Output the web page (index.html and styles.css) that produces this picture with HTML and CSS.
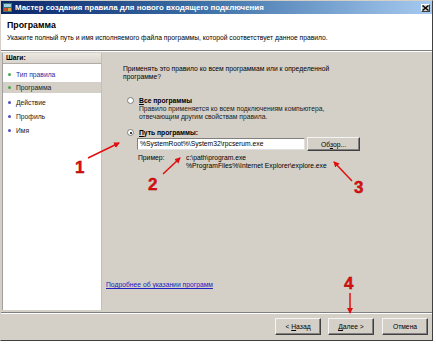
FILE: index.html
```html
<!DOCTYPE html>
<html lang="ru">
<head>
<meta charset="utf-8">
<title>Мастер создания правила</title>
<link rel="stylesheet" href="styles.css">
</head>
<body>
<div class="window">
  <div class="titlebar">
    <svg class="ticon" width="9" height="9" viewBox="0 0 9 9"><rect x="0" y="0" width="9" height="9" fill="#3a7a5a"/><rect x="1" y="1" width="7" height="3" fill="#9fd0e8"/><rect x="1" y="5" width="3" height="3" fill="#c85030"/><rect x="5" y="5" width="3" height="3" fill="#e0a040"/></svg>
    <span class="ttext">Мастер создания правила для нового входящего подключения</span>
    <span class="close"><svg width="7" height="6" viewBox="0 0 7 6"><path d="M0.5 0.5L6.5 5.5M6.5 0.5L0.5 5.5" stroke="#000" stroke-width="1.4"/></svg></span>
  </div>
  <div class="header">
    <div class="htitle">Программа</div>
    <div class="hsub">Укажите полный путь и имя исполняемого файла программы, которой соответствует данное правило.</div>
  </div>
  <div class="body">
    <div class="steps">
      <div class="steps-head">Шаги:</div>
      <ul class="steps-list">
        <li class="step done"><span class="dot green"></span>Тип правила</li>
        <li class="step current"><span class="dot green"></span>Программа</li>
        <li class="step"><span class="dot blue"></span>Действие</li>
        <li class="step"><span class="dot blue"></span>Профиль</li>
        <li class="step"><span class="dot blue"></span>Имя</li>
      </ul>
    </div>
    <div class="main">
      <p class="question">Применять это правило ко всем программам или к определенной<br>программе?</p>
      <div class="option">
        <span class="radio"></span>
        <div class="opt-body">
          <div class="opt-label"><u>В</u>се программы</div>
          <div class="opt-desc">Правило применяется ко всем подключениям компьютера,<br>отвечающим другим свойствам правила.</div>
        </div>
      </div>
      <div class="option second">
        <span class="radio checked"></span>
        <div class="opt-body">
          <div class="opt-label"><u>П</u>уть программы:</div>
          <div class="path-row">
            <div class="input">%SystemRoot%\System32\rpcserum.exe</div>
            <button class="btn browse">Об<u>з</u>ор...</button>
          </div>
          <div class="example">
            <span class="ex-label">Пример:</span>
            <span class="ex-vals">c:\path\program.exe<br>%ProgramFiles%\Internet Explorer\explore.exe</span>
          </div>
        </div>
      </div>
      <a class="link" href="#">Подробнее об указании программ</a>
    </div>
  </div>
  <div class="footer">
    <button class="btn">&lt; <u>Н</u>азад</button>
    <button class="btn"><u>Д</u>алее &gt;</button>
    <button class="btn cancel">Отмена</button>
  </div>
</div>
<svg class="annot" width="436" height="345" viewBox="0 0 436 345">
  <defs>
    <marker id="ah" markerWidth="6" markerHeight="6" refX="5" refY="3" orient="auto" markerUnits="userSpaceOnUse">
      <path d="M0 0L6 3L0 6z" fill="#e01010"/>
    </marker>
  </defs>
  <g stroke="#e01010" stroke-width="1.5" fill="none">
    <line x1="88" y1="158" x2="119" y2="143" marker-end="url(#ah)"/>
    <line x1="163" y1="174" x2="180" y2="158" marker-end="url(#ah)"/>
    <line x1="352" y1="181" x2="334" y2="162" marker-end="url(#ah)"/>
    <line x1="350" y1="293" x2="350" y2="313" marker-end="url(#ah)"/>
  </g>
  <g class="num">
    <text x="75" y="173">1</text>
    <text x="148" y="190">2</text>
    <text x="354" y="193">3</text>
    <text x="344" y="289">4</text>
  </g>
</svg>
</body>
</html>
```
FILE: styles.css
```css
* { box-sizing: border-box; }
html, body { margin: 0; padding: 0; }
body {
  width: 436px;
  height: 345px;
  background: #ffffff;
  font-family: "Liberation Sans", Arial, sans-serif;
  font-size: 6.75px;
  color: #000;
  position: relative;
  overflow: hidden;
}
.window {
  width: 433px;
  height: 341px;
  border: 1px solid #404040;
  border-top-color: #d4d0c8;
  border-left-color: #d4d0c8;
  background: #d4d0c8;
  display: flex;
  flex-direction: column;
}
.titlebar {
  height: 13px;
  flex: none;
  background: linear-gradient(to right, #0a246a 0%, #3a6ea5 45%, #a6caf0 100%);
  display: flex;
  align-items: center;
  padding: 0 2px 0 2px;
  gap: 3px;
}
.ticon { flex: none; }
.ttext {
  color: #fff;
  font-weight: bold;
  font-size: 7.9px;
  flex: 1;
  white-space: nowrap;
}
.close {
  width: 9px;
  height: 8px;
  background: #d4d0c8;
  border: 1px solid #404040;
  border-top-color: #fff;
  border-left-color: #fff;
  display: flex;
  align-items: center;
  justify-content: center;
}
.header {
  height: 37px;
  flex: none;
  background: #fff;
  border-bottom: 1px solid #808080;
  box-shadow: 0 1px 0 #fff;
  padding: 5px 0 0 6px;
}
.htitle {
  font-weight: bold;
  font-size: 8.8px;
  height: 15px;
  line-height: 12px;
}
.hsub {
  line-height: 8px;
  white-space: nowrap;
}
.body {
  flex: 1;
  display: flex;
  margin-top: 2px;
}
.steps {
  width: 100px;
  margin-left: 1px;
  background: #fff;
  border-right: 1px solid #c0c0c0;
  border-left: 1px solid #a0a0a0;
  margin-bottom: 2px;
}
.steps-head {
  height: 11px;
  background: linear-gradient(#ece9e2, #d8d4cc);
  border-bottom: 1px solid #b0aca4;
  font-weight: bold;
  padding-left: 3px;
  line-height: 10px;
}
.steps-list {
  list-style: none;
  margin: 0;
  padding: 3px 0 0 0;
}
.step {
  height: 14px;
  display: flex;
  align-items: center;
  padding-left: 5px;
  gap: 5px;
  color: #202020;
}
.step.done { color: #2a2aa0; }
.step.current { background: #d4d0c8; height: 11px; margin: 1px 0 2px 0; }
.dot {
  width: 3px;
  height: 3px;
  border-radius: 50%;
  flex: none;
}
.dot.green { background: #4aa84a; }
.dot.blue { background: #5050c0; }
.main {
  flex: 1;
  padding: 12px 0 0 21px;
  display: flex;
  flex-direction: column;
}
.question {
  margin: 0;
  line-height: 8px;
}
.option {
  display: flex;
  gap: 5px;
  margin-top: 15px;
  margin-left: 4px;
}
.option.second { margin-top: 7px; }
.radio {
  width: 7px;
  height: 7px;
  border-radius: 50%;
  background: #fff;
  border: 1px solid #808080;
  margin-top: 1px;
  flex: none;
  position: relative;
}
.radio.checked::after {
  content: "";
  position: absolute;
  left: 1.5px;
  top: 1.5px;
  width: 2px;
  height: 2px;
  border-radius: 50%;
  background: #000;
}
.opt-label {
  font-weight: bold;
  line-height: 9px;
}
.opt-desc {
  line-height: 8px;
  color: #202020;
}
.path-row {
  display: flex;
  align-items: center;
  gap: 2px;
  margin-top: 0px;
  margin-left: -2px;
}
.input {
  width: 168px;
  height: 12px;
  background: #fff;
  border: 1px solid #808080;
  border-right-color: #e0e0e0;
  border-bottom-color: #e0e0e0;
  padding-left: 2px;
  line-height: 10px;
}
.btn {
  font-family: "Liberation Sans", Arial, sans-serif;
  font-size: 6.75px;
  color: #000;
  background: #d4d0c8;
  border: 1px solid #404040;
  border-top-color: #f4f4f4;
  border-left-color: #f4f4f4;
  box-shadow: inset -1px -1px 0 #808080;
  padding: 0;
  margin: 0;
}
.browse {
  width: 53px;
  height: 14px;
}
.example {
  display: flex;
  margin-top: 3px;
  line-height: 8px;
  margin-left: -1px;
}
.ex-label { width: 48px; }
.link {
  margin-top: auto;
  margin-bottom: 24px;
  margin-left: -17px;
  color: #2020c0;
  text-decoration: underline;
}
.footer {
  height: 28px;
  flex: none;
  border-top: 1px solid #808080;
  box-shadow: inset 0 1px 0 #fff;
  display: flex;
  justify-content: flex-end;
  align-items: flex-start;
  padding: 5px 4px 0 0;
  gap: 7px;
}
.footer .btn {
  width: 46px;
  height: 17px;
}
.footer .cancel { margin-left: 1px; }
.annot {
  position: absolute;
  left: 0;
  top: 0;
  pointer-events: none;
}
.num text {
  font-family: "Liberation Sans", Arial, sans-serif;
  font-weight: bold;
  font-size: 17px;
  fill: #e01010;
  stroke: #a00000;
  stroke-width: 0.4px;
}
```
